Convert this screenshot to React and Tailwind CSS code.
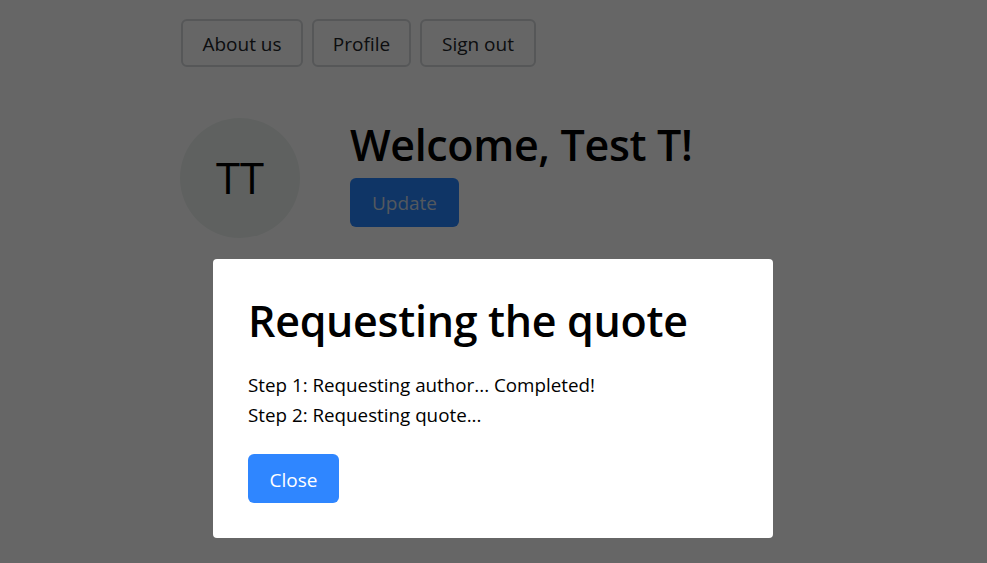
export default function App() {
  const font = { fontFamily: '"Open Sans", "Noto Sans", sans-serif' };
  return (
    <div className="relative w-[987px] h-[563px] bg-white overflow-hidden text-[#212529]" style={font}>
      <div className="pl-[181px] pt-[19px]">
        <nav className="flex gap-[9px]">
          <button className="h-[48px] w-[122px] pt-[3px] rounded-[6px] border-2 border-[#d6d9dc] text-[19px] text-[#212529]">About us</button>
          <button className="h-[48px] w-[99px] pt-[3px] rounded-[6px] border-2 border-[#d6d9dc] text-[19px] text-[#212529]">Profile</button>
          <button className="h-[48px] w-[116px] pt-[3px] rounded-[6px] border-2 border-[#d6d9dc] text-[19px] text-[#212529]">Sign out</button>
        </nav>
        <div className="mt-[51px] flex gap-[50px] -ml-[1px]">
          <div className="w-[120px] h-[120px] rounded-full bg-[#edf3f0] flex items-center justify-center text-[43.5px] text-black leading-none">TT</div>
          <div className="flex flex-col">
            <h1 className="text-[43px] leading-[56px] font-semibold text-black -mt-[1px] tracking-[-0.35px]">Welcome, Test T!</h1>
            <div className="mt-[5px]">
              <button className="h-[49px] w-[109px] pt-[2px] rounded-[6px] bg-[#2684ff] text-[19px] text-[#cfdcec]">Update</button>
            </div>
          </div>
        </div>
      </div>

      <div className="absolute inset-0 bg-black/60"></div>

      <div className="absolute left-[213px] top-[259px] w-[560px] h-[279px] bg-white rounded-[4px] px-[35px] pt-[32px]">
        <h2 className="text-[43px] leading-[60px] font-semibold text-black tracking-[-0.3px]">Requesting the quote</h2>
        <div className="mt-[19px] text-[18.8px] leading-[30px] text-black">
          <p>Step 1: Requesting author... Completed!</p>
          <p>Step 2: Requesting quote...</p>
        </div>
        <button className="mt-[24px] h-[49px] w-[91px] pt-[3px] rounded-[6px] bg-[#2f86ff] text-white text-[19px]">Close</button>
      </div>
    </div>
  );
}
